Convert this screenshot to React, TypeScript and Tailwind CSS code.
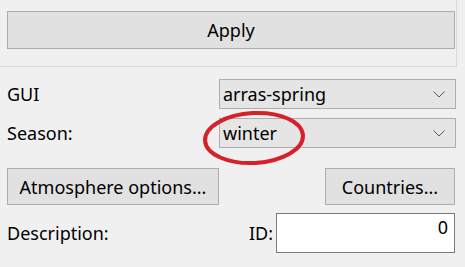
function Combo({ value }: { value: string }) {
  return (
    <div className="w-[237px] h-[30px] bg-[#e5e5e5] border border-[#adadad] flex items-center justify-between pl-[3px] pr-[10px]">
      <span className="leading-none">{value}</span>
      <svg width="12" height="7" viewBox="0 0 12 7" className="mt-[1px]">
        <polyline points="0.5,0.5 6,6 11.5,0.5" fill="none" stroke="#5a5a5a" strokeWidth="1" />
      </svg>
    </div>
  );
}

export default function App() {
  return (
    <div className="relative w-[465px] h-[267px] bg-[#f0f0f0] text-[18px] text-black font-['Noto_Sans',sans-serif] overflow-hidden">
      <div className="w-[457px] h-[67px] border-r border-b border-[#dadada] pl-[7px] pr-[2px] pt-[11px]">
        <button className="w-[448px] h-[38px] bg-[#e1e1e1] border border-[#adadad] leading-none">
          Apply
        </button>
      </div>

      <div className="pl-[7px] pt-[12px] flex flex-col">
        <div className="flex items-center h-[30px]">
          <span className="w-[212px]">GUI</span>
          <Combo value="arras-spring" />
        </div>
        <div className="flex items-center h-[30px] mt-[9px]">
          <span className="w-[212px]">Season:</span>
          <Combo value="winter" />
        </div>
        <div className="flex items-center justify-between h-[37px] mt-[20px] pr-[10px]">
          <button className="w-[212px] h-[37px] bg-[#e1e1e1] border border-[#adadad] leading-none">
            Atmosphere options...
          </button>
          <button className="w-[130px] h-[37px] bg-[#e1e1e1] border border-[#adadad] leading-none">
            Countries...
          </button>
        </div>
        <div className="flex items-center h-[40px] mt-[8px]">
          <span className="w-[242px]">Description:</span>
          <span className="w-[27px]">ID:</span>
          <div className="w-[179px] h-[40px] bg-white border border-[#7a7a7a] flex justify-end items-start pt-[4px] pr-[6px] leading-none">
            0
          </div>
        </div>
      </div>

      <svg className="absolute left-[200px] top-[108px]" width="108" height="60" viewBox="0 0 108 60">
        <ellipse cx="54" cy="30" rx="49" ry="25" fill="none" stroke="#d8202a" strokeWidth="4" transform="rotate(-3 54 30)" />
      </svg>
    </div>
  );
}
